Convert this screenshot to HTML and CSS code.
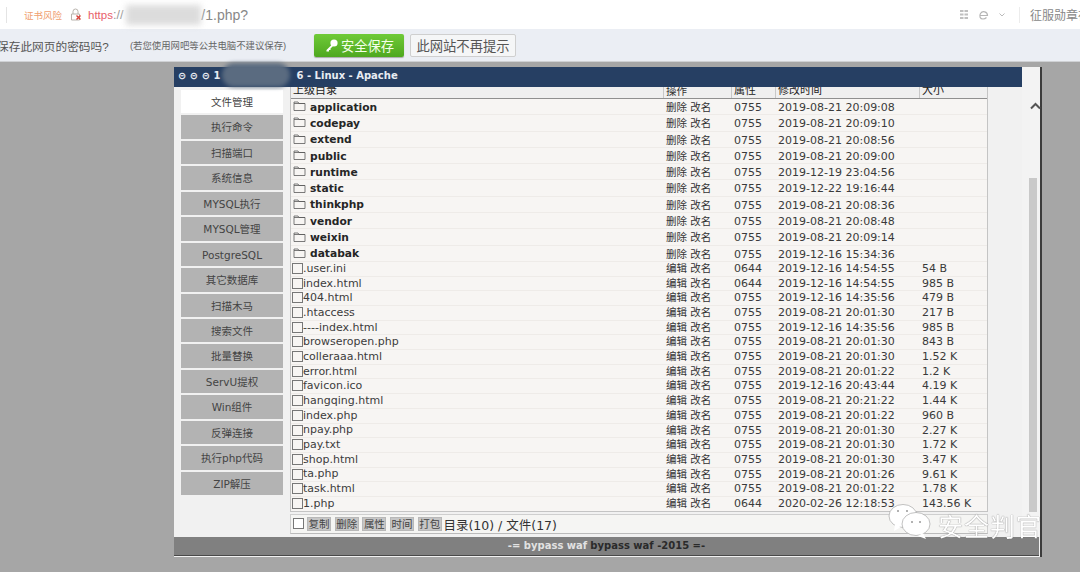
FILE: index.html
```html
<!DOCTYPE html>
<html lang="zh-CN">
<head>
<meta charset="utf-8">
<title>1.php</title>
<link rel="stylesheet" href="styles.css">
</head>
<body>
<div class="page">
  <header class="addr">
    <span class="addr-sep"></span>
    <span class="risk">证书风险</span>
    <svg class="lock" width="13" height="13" viewBox="0 0 13 13"><path d="M3 6V3.500a2.500 2.500 0 0 1 5 0V6M1.500 6h8v6h-8z" fill="none" stroke="#b9b4ae"/><path d="M6.500 7.500l4 4M10.500 7.500l-4 4" stroke="#d9423a" stroke-width="1.400"/></svg>
    <span class="https">https</span><span class="slashes">://</span>
    <span class="url-mask"></span>
    <span class="path">/1.php?</span>
    <span class="addr-right">
      <svg class="ic-grid" width="8" height="9" viewBox="0 0 8 9"><path d="M0 0h3.500v2H0zM4.500 0H8v2H4.500zM0 3.500h3.500v2H0zM4.500 3.500H8v2H4.500zM0 7h3.500v2H0zM4.500 7H8v2H4.500z" fill="#c0c0c0"/></svg>
      <svg class="ic-e" width="11" height="10" viewBox="0 0 11 10"><path d="M2 5.500h7.500a3.800 3.800 0 0 0-7-2c-1.500 2.500-.5 5.500 2.500 5.500 1.500 0 2.500-.5 3.500-1.500" fill="none" stroke="#b5b5b5" stroke-width="1.200"/></svg>
      <svg class="caret" width="6" height="4" viewBox="0 0 6 4"><path d="M.5 .5l2.500 2.500 2.500-2.500" fill="none" stroke="#bbb"/></svg>
      <span class="right-sep"></span>
      <span class="medal">征服勋章在</span>
    </span>
  </header>
  <section class="pwbar">
    <span class="ask">保存此网页的密码吗?</span>
    <span class="hint">(若您使用网吧等公共电脑不建议保存)</span>
    <span class="btn-save"><svg width="15" height="15" viewBox="0 0 15 15"><circle cx="10" cy="5" r="3.600" fill="#fff"/><path d="M8 6.500l-5.500 5.500v1.500h2.500v-1.500h1.500v-1.500l3-3z" fill="#fff"/></svg>安全保存</span>
    <span class="btn-no">此网站不再提示</span>
  </section>
  <main class="stage">
    <div class="window">
      <div class="upper">
        <div class="left">
          <div class="title">⊝ ⊝ ⊝ 1<span class="title-gap"></span>6 - Linux - Apache</div>
          <div class="cols">
            <nav class="side">
              <a class="tab on">文件管理</a>
              <a class="tab">执行命令</a>
              <a class="tab">扫描端口</a>
              <a class="tab">系统信息</a>
              <a class="tab">MYSQL执行</a>
              <a class="tab">MYSQL管理</a>
              <a class="tab">PostgreSQL</a>
              <a class="tab">其它数据库</a>
              <a class="tab">扫描木马</a>
              <a class="tab">搜索文件</a>
              <a class="tab">批量替换</a>
              <a class="tab">ServU提权</a>
              <a class="tab">Win组件</a>
              <a class="tab">反弹连接</a>
              <a class="tab">执行php代码</a>
              <a class="tab">ZIP解压</a>
            </nav>
            <div class="panel">
              <div class="list">
                <div class="row head"><span>上级目录</span><span>操作</span><span>属性</span><span>修改时间</span><span>大小</span></div>
                <div class="row dir"><span class="name"><svg class="folder" viewBox="0 0 13 12"><path d="M1 3.500V2h4l1 1.500h6V10.500H1zM1 3.500h11" fill="none"/></svg>application</span><span>删除 改名</span><span>0755</span><span>2019-08-21 20:09:08</span><span></span></div>
                <div class="row dir"><span class="name"><svg class="folder" viewBox="0 0 13 12"><path d="M1 3.500V2h4l1 1.500h6V10.500H1zM1 3.500h11" fill="none"/></svg>codepay</span><span>删除 改名</span><span>0755</span><span>2019-08-21 20:09:10</span><span></span></div>
                <div class="row dir"><span class="name"><svg class="folder" viewBox="0 0 13 12"><path d="M1 3.500V2h4l1 1.500h6V10.500H1zM1 3.500h11" fill="none"/></svg>extend</span><span>删除 改名</span><span>0755</span><span>2019-08-21 20:08:56</span><span></span></div>
                <div class="row dir"><span class="name"><svg class="folder" viewBox="0 0 13 12"><path d="M1 3.500V2h4l1 1.500h6V10.500H1zM1 3.500h11" fill="none"/></svg>public</span><span>删除 改名</span><span>0755</span><span>2019-08-21 20:09:00</span><span></span></div>
                <div class="row dir"><span class="name"><svg class="folder" viewBox="0 0 13 12"><path d="M1 3.500V2h4l1 1.500h6V10.500H1zM1 3.500h11" fill="none"/></svg>runtime</span><span>删除 改名</span><span>0755</span><span>2019-12-19 23:04:56</span><span></span></div>
                <div class="row dir"><span class="name"><svg class="folder" viewBox="0 0 13 12"><path d="M1 3.500V2h4l1 1.500h6V10.500H1zM1 3.500h11" fill="none"/></svg>static</span><span>删除 改名</span><span>0755</span><span>2019-12-22 19:16:44</span><span></span></div>
                <div class="row dir"><span class="name"><svg class="folder" viewBox="0 0 13 12"><path d="M1 3.500V2h4l1 1.500h6V10.500H1zM1 3.500h11" fill="none"/></svg>thinkphp</span><span>删除 改名</span><span>0755</span><span>2019-08-21 20:08:36</span><span></span></div>
                <div class="row dir"><span class="name"><svg class="folder" viewBox="0 0 13 12"><path d="M1 3.500V2h4l1 1.500h6V10.500H1zM1 3.500h11" fill="none"/></svg>vendor</span><span>删除 改名</span><span>0755</span><span>2019-08-21 20:08:48</span><span></span></div>
                <div class="row dir"><span class="name"><svg class="folder" viewBox="0 0 13 12"><path d="M1 3.500V2h4l1 1.500h6V10.500H1zM1 3.500h11" fill="none"/></svg>weixin</span><span>删除 改名</span><span>0755</span><span>2019-08-21 20:09:14</span><span></span></div>
                <div class="row dir"><span class="name"><svg class="folder" viewBox="0 0 13 12"><path d="M1 3.500V2h4l1 1.500h6V10.500H1zM1 3.500h11" fill="none"/></svg>databak</span><span>删除 改名</span><span>0755</span><span>2019-12-16 15:34:36</span><span></span></div>
                <div class="row file"><span class="name"><i class="box"></i>.user.ini</span><span>编辑 改名</span><span>0644</span><span>2019-12-16 14:54:55</span><span>54 B</span></div>
                <div class="row file"><span class="name"><i class="box"></i>index.html</span><span>编辑 改名</span><span>0644</span><span>2019-12-16 14:54:55</span><span>985 B</span></div>
                <div class="row file"><span class="name"><i class="box"></i>404.html</span><span>编辑 改名</span><span>0755</span><span>2019-12-16 14:35:56</span><span>479 B</span></div>
                <div class="row file"><span class="name"><i class="box"></i>.htaccess</span><span>编辑 改名</span><span>0755</span><span>2019-08-21 20:01:30</span><span>217 B</span></div>
                <div class="row file"><span class="name"><i class="box"></i>----index.html</span><span>编辑 改名</span><span>0755</span><span>2019-12-16 14:35:56</span><span>985 B</span></div>
                <div class="row file"><span class="name"><i class="box"></i>browseropen.php</span><span>编辑 改名</span><span>0755</span><span>2019-08-21 20:01:30</span><span>843 B</span></div>
                <div class="row file"><span class="name"><i class="box"></i>colleraaa.html</span><span>编辑 改名</span><span>0755</span><span>2019-08-21 20:01:30</span><span>1.52 K</span></div>
                <div class="row file"><span class="name"><i class="box"></i>error.html</span><span>编辑 改名</span><span>0755</span><span>2019-08-21 20:01:22</span><span>1.2 K</span></div>
                <div class="row file"><span class="name"><i class="box"></i>favicon.ico</span><span>编辑 改名</span><span>0755</span><span>2019-12-16 20:43:44</span><span>4.19 K</span></div>
                <div class="row file"><span class="name"><i class="box"></i>hangqing.html</span><span>编辑 改名</span><span>0755</span><span>2019-08-21 20:21:22</span><span>1.44 K</span></div>
                <div class="row file"><span class="name"><i class="box"></i>index.php</span><span>编辑 改名</span><span>0755</span><span>2019-08-21 20:01:22</span><span>960 B</span></div>
                <div class="row file"><span class="name"><i class="box"></i>npay.php</span><span>编辑 改名</span><span>0755</span><span>2019-08-21 20:01:30</span><span>2.27 K</span></div>
                <div class="row file"><span class="name"><i class="box"></i>pay.txt</span><span>编辑 改名</span><span>0755</span><span>2019-08-21 20:01:30</span><span>1.72 K</span></div>
                <div class="row file"><span class="name"><i class="box"></i>shop.html</span><span>编辑 改名</span><span>0755</span><span>2019-08-21 20:01:30</span><span>3.47 K</span></div>
                <div class="row file"><span class="name"><i class="box"></i>ta.php</span><span>编辑 改名</span><span>0755</span><span>2019-08-21 20:01:26</span><span>9.61 K</span></div>
                <div class="row file"><span class="name"><i class="box"></i>task.html</span><span>编辑 改名</span><span>0755</span><span>2019-08-21 20:01:22</span><span>1.78 K</span></div>
                <div class="row file"><span class="name"><i class="box"></i>1.php</span><span>编辑 改名</span><span>0644</span><span>2020-02-26 12:18:53</span><span>143.56 K</span></div>
              </div>
              <div class="tools">
                <i class="box"></i>
                <span class="tool">复制</span><span class="tool">删除</span><span class="tool">属性</span><span class="tool">时间</span><span class="tool">打包</span>
                <span class="count">目录(10) / 文件(17)</span>
              </div>
            </div>
          </div>
        </div>
        <div class="scroll">
          <svg class="chev" width="11" height="8" viewBox="0 0 11 8"><path d="M1 6.500l4.500-4.500 4.500 4.500" fill="none" stroke="#555" stroke-width="2"/></svg>
          <div class="thumb"></div>
        </div>
      </div>
      <footer class="foot"><b class="light">-= bypass waf</b> <b>bypass waf -2015 =-</b></footer>
    </div>
  </main>
  <div class="title-mask"></div>
  <div class="mark">
    <svg width="46" height="37" viewBox="0 0 46 37"><ellipse cx="15" cy="13" rx="14" ry="11.500" fill="#fff" stroke="#999" stroke-width=".6"/><path d="M7 21l-1 7 7-4z" fill="#fff"/><ellipse cx="28" cy="21" rx="14" ry="11.500" fill="#fff" stroke="#999" stroke-width=".6"/><path d="M35 30l3 6-8-3z" fill="#fff"/><circle cx="24" cy="19" r="1" fill="#999"/><circle cx="32" cy="19" r="1" fill="#999"/><circle cx="10" cy="8" r="1" fill="#999"/><circle cx="19" cy="8" r="1" fill="#999"/></svg>
    <span>安全判官</span>
  </div>
</div>
</body>
</html>
```
FILE: styles.css
```css
* { box-sizing: border-box; }
html, body { margin: 0; padding: 0; }
body { background: #a6a6a6; font-family: "DejaVu Sans", "Noto Sans CJK SC", sans-serif; }
.page { position: relative; width: 1080px; height: 572px; overflow: hidden; display: flex; flex-direction: column; filter: blur(0.35px); }

.addr { height: 29px; background: #fff; display: flex; align-items: center; padding-left: 6px; flex: none; font-family: "Liberation Sans", "Noto Sans CJK SC", sans-serif; }
.addr-sep { width: 1px; height: 16px; background: #e4e4e4; margin-right: 17px; }
.risk { font-size: 9.500px; color: #f0a070; width: 46px; }
.lock { margin-right: 5px; }
.https { font-size: 11.500px; color: #e8606a; }
.slashes { font-size: 12.500px; color: #999; margin-right: 3px; }
.url-mask { width: 75px; height: 20px; background: #dcdcdc; filter: blur(3px); }
.path { font-size: 14px; color: #888; }
.addr-right { margin-left: auto; display: flex; align-items: center; flex: none; width: 120px; white-space: nowrap; overflow: hidden; }
.addr-right svg { flex: none; }
.ic-e { margin-left: 10px; }
.caret { margin-left: 10px; }
.right-sep { flex: none; width: 1px; height: 16px; background: #ececec; margin: 0 10px 0 14px; }
.medal { font-size: 12px; color: #888; }

.pwbar { height: 33px; background: #ebeef4; border-bottom: 1px solid #cfd1d4; display: flex; align-items: center; flex: none; font-family: "Liberation Sans", "Noto Sans CJK SC", sans-serif; overflow: hidden; }
.ask { font-size: 11.700px; color: #555; margin-left: -3px; width: 133px; white-space: nowrap; }
.hint { font-size: 9.400px; color: #666; width: 184px; white-space: nowrap; }
.btn-save { width: 90px; height: 23px; background: linear-gradient(#6fca38, #4ea81f); border-radius: 2px; color: #f4ffe8; font-size: 13.300px; display: flex; align-items: center; justify-content: center; gap: 2px; box-shadow: 0 1px 1px #aaa; }
.btn-no { width: 106px; height: 23px; margin-left: 6px; background: #f5f6f7; border: 1px solid #cfcfcf; border-radius: 2px; color: #555; font-size: 13.300px; display: flex; align-items: center; justify-content: center; }

.stage { flex: 1; padding: 5px 0 0 174px; }
.window { width: 868px; height: 490px; background: #f1f1f1; border-right: 2px solid #3c3c3c; display: flex; flex-direction: column; }
.upper { flex: 1; display: flex; min-height: 0; }
.left { width: 848px; display: flex; flex-direction: column; }
.title { height: 20px; background: #263f63; color: #e8ecf2; font-size: 10px; font-weight: bold; line-height: 17px; padding-left: 4px; white-space: nowrap; flex: none; }
.title-gap { display: inline-block; width: 76px; }
.title-mask { position: absolute; left: 222px; top: 63px; width: 68px; height: 24px; background: #5a6b80; border-radius: 12px; filter: blur(2px); }

.cols { flex: 1; display: flex; min-height: 0; }
.side { width: 114px; padding: 3px 0 0 7px; display: flex; flex-direction: column; flex: none; }
.tab { display: block; flex: none; width: 102px; height: 23.450px; margin-bottom: 2px; background: #b3b3b3; color: #444; font-size: 10.500px; line-height: 25px; text-align: center; white-space: nowrap; }
.tab.on { background: #fff; color: #444; }

.panel { flex: 1; min-width: 0; padding-left: 2px; display: flex; flex-direction: column; }
.list { width: 698px; height: 425px; border: 1px solid #c4c4c4; border-top: 0; flex: none; overflow: hidden; background: #f7f5f3; }
.row { display: grid; grid-template-columns: 372px 68px 44px 144px 1fr; font-size: 11px; color: #3a3a3a; border-bottom: 1px solid #eeebe8; white-space: nowrap; }
.row > span { padding-left: 3px; overflow: hidden; }
.row > span:nth-child(2) { font-size: 10.500px; color: #333; }
.head { height: 12px; line-height: 8px; background: #efefef; color: #222; border-bottom: 1px solid #8f8f8f; }
.head > span { border-left: 1px solid #c8c8c8; padding-left: 2px; }
.head > span:first-child { border-left: 0; }
.dir { height: 16.300px; line-height: 16px; }
.dir > span { padding-top: 1px; }
.dir > span:nth-child(2) { line-height: 14px; }
.dir .name { font-weight: bold; font-size: 10.700px; color: #262626; display: flex; align-items: center; gap: 4px; padding: 2px 0 0 2px; }
.file { height: 14.700px; line-height: 14px; }
.file > span:nth-child(2) { line-height: 12px; }
.file .name { display: flex; align-items: center; padding-left: 1px; color: #3c3c3c; }
.folder { width: 13px; height: 12px; flex: none; margin-top: -3px; stroke: #5a5a5a; stroke-width: 0.8; }
.box { display: block; flex: none; width: 11px; height: 11px; background: #fff; border: 1px solid #777; }
.file .box { align-self: flex-start; margin: 1px 0 0 0; background: transparent; }

.tools { width: 698px; height: 20px; margin-top: 2px; border: 1px solid #cfcfcf; border-bottom-color: #bbb; background: #f5f5f3; display: flex; align-items: center; padding-left: 2px; font-size: 10.500px; color: #333; flex: none; }
.tools .box { margin: -2px 3px 0 0; }
.tool { width: 24px; height: 14px; margin-right: 3.700px; background: #c6c6c6; border: 1px solid #b8b8b8; text-align: center; line-height: 12px; color: #444; white-space: nowrap; }
.count { font-size: 12.500px; color: #333; margin-left: -2px; white-space: nowrap; }

.scroll { flex: 1; position: relative; background: #f3f3f3; }
.chev { position: absolute; left: 8px; top: 35px; }
.thumb { position: absolute; left: 7px; top: 111px; width: 8px; height: 334px; background: #c9c9c9; }

.foot { height: 19px; margin-right: 1px; margin-bottom: 1px; background: #808080; color: #2a2a2a; font-size: 10px; line-height: 18px; text-align: center; flex: none; border-bottom: 1px solid #4a4a4a; }
.light { color: #e2e2e2; }

.mark { position: absolute; left: 888px; top: 503px; display: flex; align-items: center; gap: 4px; color: #fff; }
.mark span { font-size: 25px; font-family: "Noto Sans CJK SC", sans-serif; line-height: 30px; letter-spacing: 1px; margin-top: 6px; text-shadow: 0 0 1px #555; white-space: nowrap; }
```
